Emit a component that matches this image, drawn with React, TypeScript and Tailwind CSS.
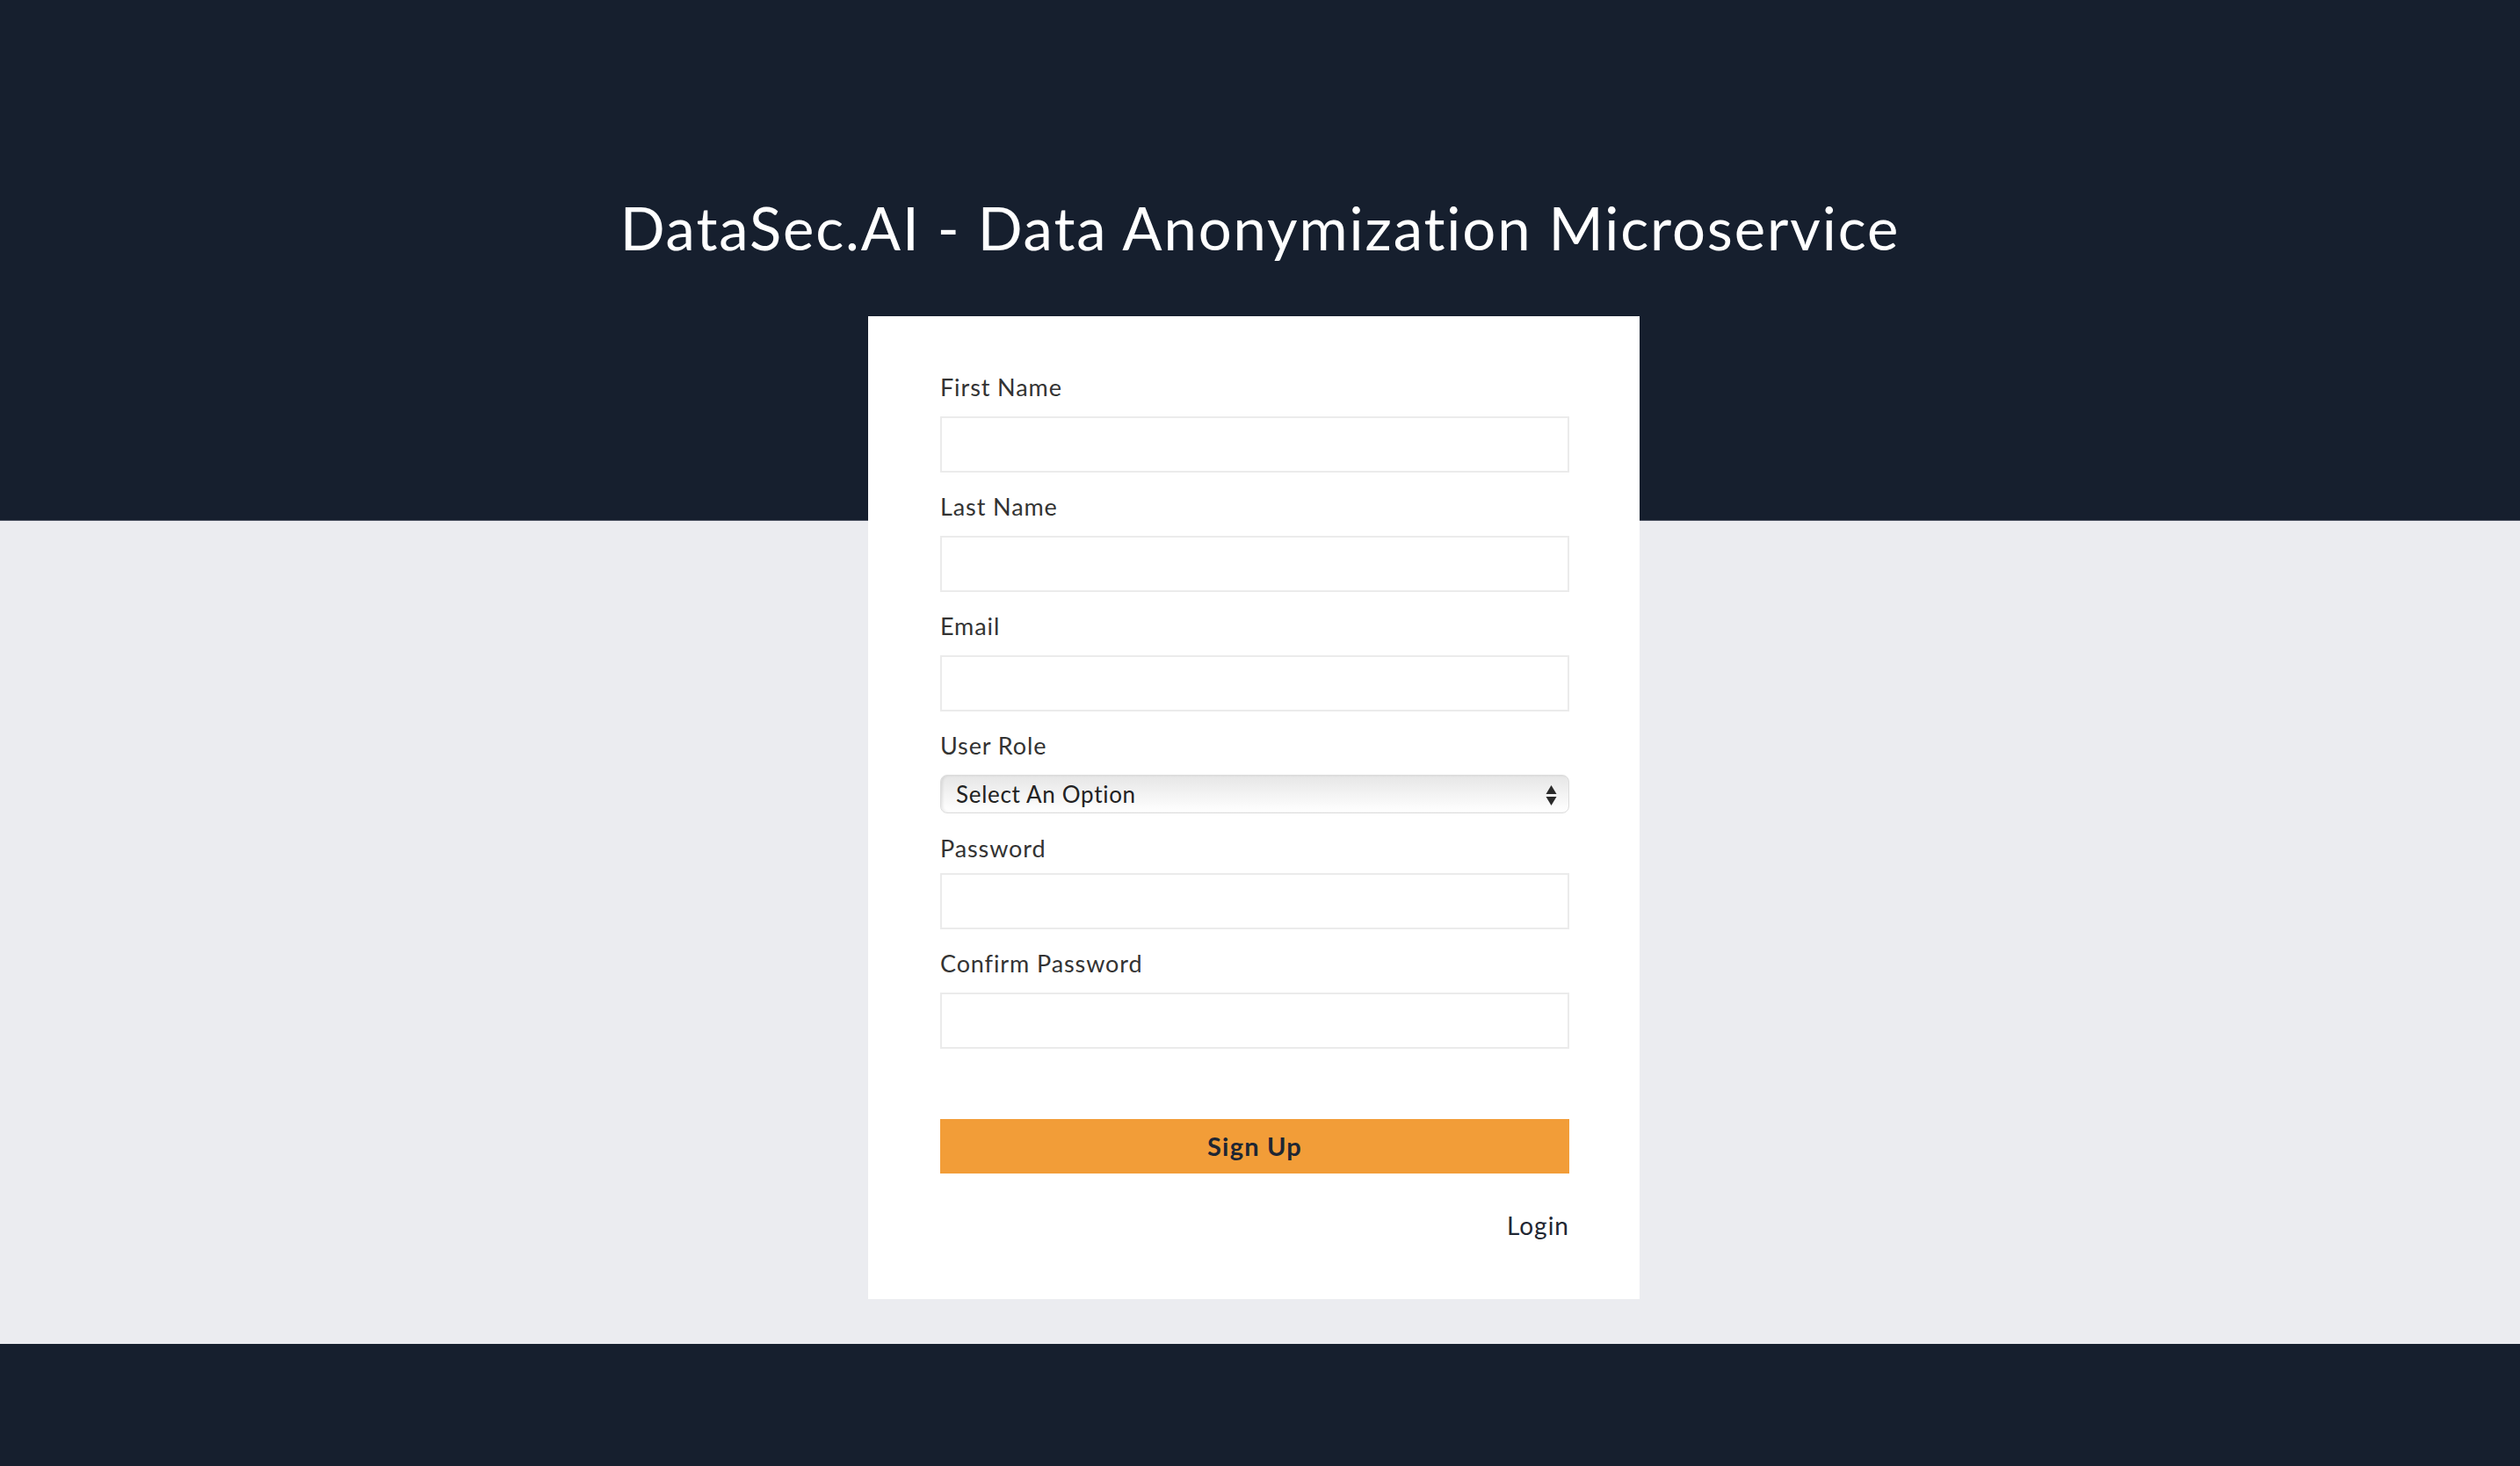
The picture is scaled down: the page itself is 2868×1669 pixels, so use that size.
import React from 'react';

const fields: { label: string; type: string }[] = [
  { label: 'First Name', type: 'text' },
  { label: 'Last Name', type: 'text' },
  { label: 'Email', type: 'email' },
];

const Field: React.FC<{ label: string; type: string; tight?: boolean }> = ({ label, type, tight }) => (
  <div className="mb-[23px]">
    <label
      className={
        tight
          ? 'block text-[27px] leading-[32px] tracking-[0.9px] text-[#333333] mb-[12px]'
          : 'block text-[27px] leading-[32px] tracking-[0.9px] text-[#333333] mb-[17px]'
      }
    >
      {label}
    </label>
    <input
      type={type}
      className="block w-full h-[64px] border-2 border-[#ebebeb] bg-white px-4 text-[26px] outline-none"
    />
  </div>
);

const App: React.FC = () => {
  return (
    <div
      className="min-h-screen flex flex-col bg-[#161f2e]"
      style={{ fontFamily: 'Lato, "Noto Sans", sans-serif', fontVariantLigatures: 'none' }}
    >
      {/* Header band */}
      <header className="h-[593px] shrink-0 pt-[226px] border-b border-[#4a5060]">
        <h1 className="text-center text-white text-[67px] leading-[67px] font-normal tracking-[1.9px]">
          DataSec.AI - Data Anonymization Microservice
        </h1>
      </header>

      {/* Form area */}
      <main className="bg-[#ebecf0] pb-[51px] shrink-0">
        <div className="flex justify-center pr-[14px]">
          <div className="w-[878px] -mt-[233px] bg-white pt-[65px] pb-[68px] pl-[82px] pr-[80px]">
            {fields.map((f) => (
              <Field key={f.label} label={f.label} type={f.type} />
            ))}

            <div className="mb-[24px]">
              <label className="block text-[27px] leading-[32px] tracking-[0.9px] text-[#333333] mb-[17px]">
                User Role
              </label>
              <div className="relative h-[44px] rounded-[8px] border border-[#dcdcdc] bg-gradient-to-b from-[#e6e6e6] via-[#f3f3f3] to-white shadow-[inset_2px_0_3px_rgba(0,0,0,0.08)] flex items-center pl-[17px]">
                <span className="text-[26px] leading-none tracking-[0.7px] text-[#222222]">Select An Option</span>
                <svg
                  className="absolute right-[13px] top-[10px]"
                  width="13"
                  height="25"
                  viewBox="0 0 13 25"
                >
                  <polygon points="6.5,1 12.5,11 0.5,11" fill="#2a2a2a" />
                  <polygon points="0.5,14 12.5,14 6.5,24" fill="#2a2a2a" />
                </svg>
              </div>
            </div>

            <Field label="Password" type="password" tight />
            <Field label="Confirm Password" type="password" />

            <button className="mt-[80px] block w-full h-[62px] bg-[#f29d38] text-[#1e2633] text-[29px] font-bold tracking-[1.2px]">
              Sign Up
            </button>

            <div className="mt-[43px] flex justify-end">
              <a className="text-[28px] leading-[32px] tracking-[1px] text-[#1f2733] cursor-pointer">Login</a>
            </div>
          </div>
        </div>
      </main>

      {/* Footer */}
      <footer className="flex-1 bg-[#161f2e]" />
    </div>
  );
};

export default App;
